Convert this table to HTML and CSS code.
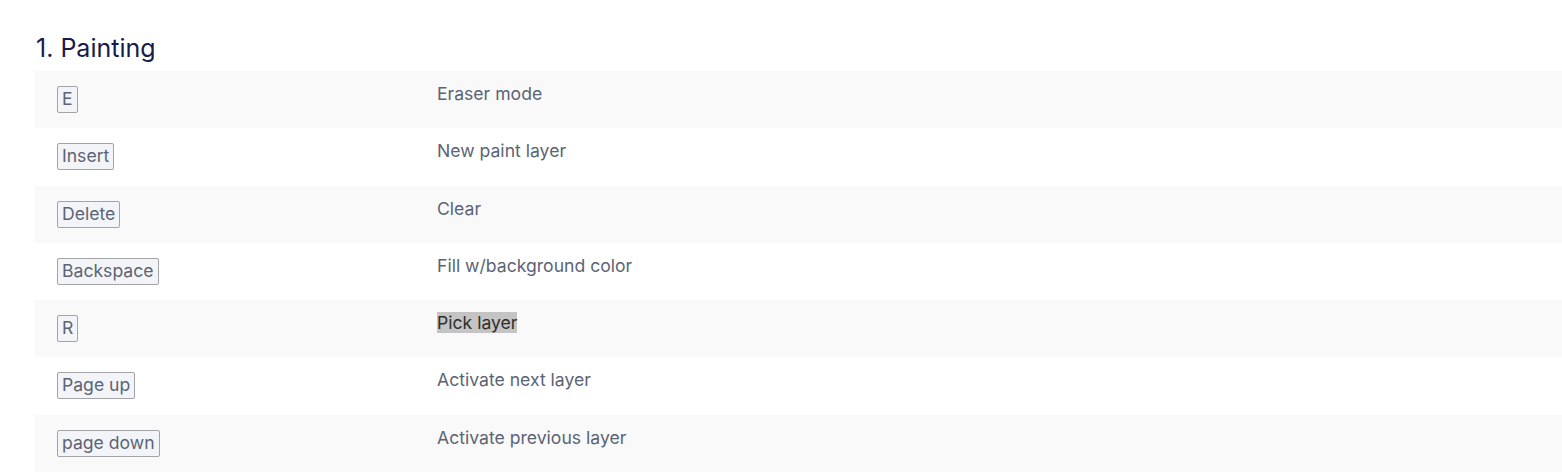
FILE: index.html
```html
<!DOCTYPE html>
<html>
<head>
<meta charset="utf-8">
<link rel="stylesheet" href="styles.css">
</head>
<body>
<div class="page">
  <h2 class="title">1. Painting</h2>
  <table class="keys">
    <tr class="odd"><td class="key"><kbd>E</kbd></td><td class="desc">Eraser mode</td></tr>
    <tr><td class="key"><kbd>Insert</kbd></td><td class="desc">New paint layer</td></tr>
    <tr class="odd"><td class="key"><kbd>Delete</kbd></td><td class="desc">Clear</td></tr>
    <tr><td class="key"><kbd>Backspace</kbd></td><td class="desc">Fill w/background color</td></tr>
    <tr class="odd"><td class="key"><kbd>R</kbd></td><td class="desc"><span class="sel">Pick layer</span></td></tr>
    <tr><td class="key"><kbd>Page up</kbd></td><td class="desc">Activate next layer</td></tr>
    <tr class="odd"><td class="key"><kbd>page down</kbd></td><td class="desc">Activate previous layer</td></tr>
  </table>
</div>
</body>
</html>
```

FILE: styles.css
```css
html, body {
  margin: 0;
  padding: 0;
  background: #ffffff;
}
body {
  font-family: Inter, "Noto Sans", sans-serif;
  color: #5b6475;
}
.page {
  padding: 32px 0 0 35px;
}
.title {
  margin: 0 0 7px 1px;
  font-size: 25px;
  font-weight: 400;
  line-height: 32px;
  color: #1a1b48;
}
.keys {
  width: 100%;
  border-collapse: collapse;
  font-size: 17.6px;
}
.keys tr {
  height: 57.3px;
}
.keys tr.odd {
  background: #f9f9f9;
}
.keys td {
  vertical-align: top;
  padding: 12px 22px 0 22px;
  line-height: 22px;
}
.keys td.key {
  width: 336px;
}
kbd {
  display: inline-block;
  margin-top: 3px;
  padding: 1px 4px 2px;
  font-family: Inter, "Noto Sans", sans-serif;
  font-size: 17.6px;
  line-height: 22px;
  color: #5b6475;
  background: #f3f4f7;
  border: 1px solid #a3a4a8;
  border-radius: 2px;
}
.sel {
  background: #c4c4c4;
  color: #2e2e2e;
}
```
